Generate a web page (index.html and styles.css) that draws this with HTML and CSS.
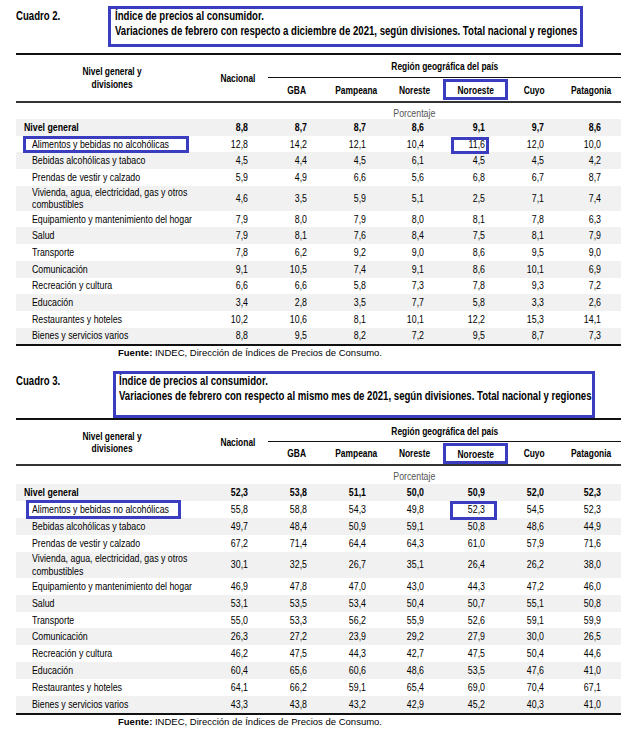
FILE: index.html
```html
<!DOCTYPE html>
<html lang="es">
<head>
<meta charset="utf-8">
<title>Cuadros IPC</title>
<link rel="stylesheet" href="styles.css">
</head>
<body>
<div class="page">

<section class="cuadro t1">
  <div class="cap">
    <div class="cap-num"><span class="sq">Cuadro 2.</span></div>
    <div class="cap-title"><span class="sq">Índice de precios al consumidor.<br>Variaciones de febrero con respecto a diciembre de 2021, según divisiones. Total nacional y regiones</span></div>
  </div>
  <div class="tbl">
    <div class="head">
      <div class="h-label"><span class="sq">Nivel general y<br>divisiones</span></div>
      <div class="h-nac"><span class="sq">Nacional</span></div>
      <div class="h-reg"><span class="sq">Región geográfica del país</span></div>
      <div class="h-sub"><span class="sq">GBA</span></div>
      <div class="h-sub"><span class="sq">Pampeana</span></div>
      <div class="h-sub"><span class="sq">Noreste</span></div>
      <div class="h-sub hl"><span class="sq">Noroeste</span></div>
      <div class="h-sub"><span class="sq">Cuyo</span></div>
      <div class="h-sub"><span class="sq">Patagonia</span></div>
    </div>
    <div class="unit"><div class="unit-text"><span class="sq">Porcentaje</span></div></div>
    <div class="body">
      <div class="row shade total"><div class="lbl top"><span class="sq">Nivel general</span></div><div class="v"><span>8,8</span></div><div class="v"><span>8,7</span></div><div class="v"><span>8,7</span></div><div class="v"><span>8,6</span></div><div class="v"><span>9,1</span></div><div class="v"><span>9,7</span></div><div class="v"><span>8,6</span></div></div>
      <div class="row"><div class="lbl"><span class="lbl-hl"><span class="sq">Alimentos y bebidas no alcohólicas</span></span></div><div class="v"><span>12,8</span></div><div class="v"><span>14,2</span></div><div class="v"><span>12,1</span></div><div class="v"><span>10,4</span></div><div class="v hv"><span>11,6</span></div><div class="v"><span>12,0</span></div><div class="v"><span>10,0</span></div></div>
      <div class="row shade"><div class="lbl"><span class="sq">Bebidas alcohólicas y tabaco</span></div><div class="v"><span>4,5</span></div><div class="v"><span>4,4</span></div><div class="v"><span>4,5</span></div><div class="v"><span>6,1</span></div><div class="v"><span>4,5</span></div><div class="v"><span>4,5</span></div><div class="v"><span>4,2</span></div></div>
      <div class="row"><div class="lbl"><span class="sq">Prendas de vestir y calzado</span></div><div class="v"><span>5,9</span></div><div class="v"><span>4,9</span></div><div class="v"><span>6,6</span></div><div class="v"><span>5,6</span></div><div class="v"><span>6,8</span></div><div class="v"><span>6,7</span></div><div class="v"><span>8,7</span></div></div>
      <div class="row shade tall"><div class="lbl"><span class="sq">Vivienda, agua, electricidad, gas y otros<br>combustibles</span></div><div class="v"><span>4,6</span></div><div class="v"><span>3,5</span></div><div class="v"><span>5,9</span></div><div class="v"><span>5,1</span></div><div class="v"><span>2,5</span></div><div class="v"><span>7,1</span></div><div class="v"><span>7,4</span></div></div>
      <div class="row"><div class="lbl"><span class="sq">Equipamiento y mantenimiento del hogar</span></div><div class="v"><span>7,9</span></div><div class="v"><span>8,0</span></div><div class="v"><span>7,9</span></div><div class="v"><span>8,0</span></div><div class="v"><span>8,1</span></div><div class="v"><span>7,8</span></div><div class="v"><span>6,3</span></div></div>
      <div class="row shade"><div class="lbl"><span class="sq">Salud</span></div><div class="v"><span>7,9</span></div><div class="v"><span>8,1</span></div><div class="v"><span>7,6</span></div><div class="v"><span>8,4</span></div><div class="v"><span>7,5</span></div><div class="v"><span>8,1</span></div><div class="v"><span>7,9</span></div></div>
      <div class="row"><div class="lbl"><span class="sq">Transporte</span></div><div class="v"><span>7,8</span></div><div class="v"><span>6,2</span></div><div class="v"><span>9,2</span></div><div class="v"><span>9,0</span></div><div class="v"><span>8,6</span></div><div class="v"><span>9,5</span></div><div class="v"><span>9,0</span></div></div>
      <div class="row shade"><div class="lbl"><span class="sq">Comunicación</span></div><div class="v"><span>9,1</span></div><div class="v"><span>10,5</span></div><div class="v"><span>7,4</span></div><div class="v"><span>9,1</span></div><div class="v"><span>8,6</span></div><div class="v"><span>10,1</span></div><div class="v"><span>6,9</span></div></div>
      <div class="row"><div class="lbl"><span class="sq">Recreación y cultura</span></div><div class="v"><span>6,6</span></div><div class="v"><span>6,6</span></div><div class="v"><span>5,8</span></div><div class="v"><span>7,3</span></div><div class="v"><span>7,8</span></div><div class="v"><span>9,3</span></div><div class="v"><span>7,2</span></div></div>
      <div class="row shade"><div class="lbl"><span class="sq">Educación</span></div><div class="v"><span>3,4</span></div><div class="v"><span>2,8</span></div><div class="v"><span>3,5</span></div><div class="v"><span>7,7</span></div><div class="v"><span>5,8</span></div><div class="v"><span>3,3</span></div><div class="v"><span>2,6</span></div></div>
      <div class="row"><div class="lbl"><span class="sq">Restaurantes y hoteles</span></div><div class="v"><span>10,2</span></div><div class="v"><span>10,6</span></div><div class="v"><span>8,1</span></div><div class="v"><span>10,1</span></div><div class="v"><span>12,2</span></div><div class="v"><span>15,3</span></div><div class="v"><span>14,1</span></div></div>
      <div class="row shade"><div class="lbl"><span class="sq">Bienes y servicios varios</span></div><div class="v"><span>8,8</span></div><div class="v"><span>9,5</span></div><div class="v"><span>8,2</span></div><div class="v"><span>7,2</span></div><div class="v"><span>9,5</span></div><div class="v"><span>8,7</span></div><div class="v"><span>7,3</span></div></div>
    </div>
  </div>
  <p class="src"><b>Fuente:</b> INDEC, Dirección de Índices de Precios de Consumo.</p>
</section>

<section class="cuadro t2">
  <div class="cap">
    <div class="cap-num"><span class="sq">Cuadro 3.</span></div>
    <div class="cap-title"><span class="sq">Índice de precios al consumidor.<br>Variaciones de febrero con respecto al mismo mes de 2021, según divisiones. Total nacional y regiones</span></div>
  </div>
  <div class="tbl">
    <div class="head">
      <div class="h-label"><span class="sq">Nivel general y<br>divisiones</span></div>
      <div class="h-nac"><span class="sq">Nacional</span></div>
      <div class="h-reg"><span class="sq">Región geográfica del país</span></div>
      <div class="h-sub"><span class="sq">GBA</span></div>
      <div class="h-sub"><span class="sq">Pampeana</span></div>
      <div class="h-sub"><span class="sq">Noreste</span></div>
      <div class="h-sub hl"><span class="sq">Noroeste</span></div>
      <div class="h-sub"><span class="sq">Cuyo</span></div>
      <div class="h-sub"><span class="sq">Patagonia</span></div>
    </div>
    <div class="unit"><div class="unit-text"><span class="sq">Porcentaje</span></div></div>
    <div class="body">
      <div class="row shade total"><div class="lbl top"><span class="sq">Nivel general</span></div><div class="v"><span>52,3</span></div><div class="v"><span>53,8</span></div><div class="v"><span>51,1</span></div><div class="v"><span>50,0</span></div><div class="v"><span>50,9</span></div><div class="v"><span>52,0</span></div><div class="v"><span>52,3</span></div></div>
      <div class="row"><div class="lbl"><span class="lbl-hl"><span class="sq">Alimentos y bebidas no alcohólicas</span></span></div><div class="v"><span>55,8</span></div><div class="v"><span>58,8</span></div><div class="v"><span>54,3</span></div><div class="v"><span>49,8</span></div><div class="v hv"><span>52,3</span></div><div class="v"><span>54,5</span></div><div class="v"><span>52,3</span></div></div>
      <div class="row shade"><div class="lbl"><span class="sq">Bebidas alcohólicas y tabaco</span></div><div class="v"><span>49,7</span></div><div class="v"><span>48,4</span></div><div class="v"><span>50,9</span></div><div class="v"><span>59,1</span></div><div class="v"><span>50,8</span></div><div class="v"><span>48,6</span></div><div class="v"><span>44,9</span></div></div>
      <div class="row"><div class="lbl"><span class="sq">Prendas de vestir y calzado</span></div><div class="v"><span>67,2</span></div><div class="v"><span>71,4</span></div><div class="v"><span>64,4</span></div><div class="v"><span>64,3</span></div><div class="v"><span>61,0</span></div><div class="v"><span>57,9</span></div><div class="v"><span>71,6</span></div></div>
      <div class="row shade tall"><div class="lbl"><span class="sq">Vivienda, agua, electricidad, gas y otros<br>combustibles</span></div><div class="v"><span>30,1</span></div><div class="v"><span>32,5</span></div><div class="v"><span>26,7</span></div><div class="v"><span>35,1</span></div><div class="v"><span>26,4</span></div><div class="v"><span>26,2</span></div><div class="v"><span>38,0</span></div></div>
      <div class="row"><div class="lbl"><span class="sq">Equipamiento y mantenimiento del hogar</span></div><div class="v"><span>46,9</span></div><div class="v"><span>47,8</span></div><div class="v"><span>47,0</span></div><div class="v"><span>43,0</span></div><div class="v"><span>44,3</span></div><div class="v"><span>47,2</span></div><div class="v"><span>46,0</span></div></div>
      <div class="row shade"><div class="lbl"><span class="sq">Salud</span></div><div class="v"><span>53,1</span></div><div class="v"><span>53,5</span></div><div class="v"><span>53,4</span></div><div class="v"><span>50,4</span></div><div class="v"><span>50,7</span></div><div class="v"><span>55,1</span></div><div class="v"><span>50,8</span></div></div>
      <div class="row"><div class="lbl"><span class="sq">Transporte</span></div><div class="v"><span>55,0</span></div><div class="v"><span>53,3</span></div><div class="v"><span>56,2</span></div><div class="v"><span>55,9</span></div><div class="v"><span>52,6</span></div><div class="v"><span>59,1</span></div><div class="v"><span>59,9</span></div></div>
      <div class="row shade"><div class="lbl"><span class="sq">Comunicación</span></div><div class="v"><span>26,3</span></div><div class="v"><span>27,2</span></div><div class="v"><span>23,9</span></div><div class="v"><span>29,2</span></div><div class="v"><span>27,9</span></div><div class="v"><span>30,0</span></div><div class="v"><span>26,5</span></div></div>
      <div class="row"><div class="lbl"><span class="sq">Recreación y cultura</span></div><div class="v"><span>46,2</span></div><div class="v"><span>47,5</span></div><div class="v"><span>44,3</span></div><div class="v"><span>42,7</span></div><div class="v"><span>47,5</span></div><div class="v"><span>50,4</span></div><div class="v"><span>44,6</span></div></div>
      <div class="row shade"><div class="lbl"><span class="sq">Educación</span></div><div class="v"><span>60,4</span></div><div class="v"><span>65,6</span></div><div class="v"><span>60,6</span></div><div class="v"><span>48,6</span></div><div class="v"><span>53,5</span></div><div class="v"><span>47,6</span></div><div class="v"><span>41,0</span></div></div>
      <div class="row"><div class="lbl"><span class="sq">Restaurantes y hoteles</span></div><div class="v"><span>64,1</span></div><div class="v"><span>66,2</span></div><div class="v"><span>59,1</span></div><div class="v"><span>65,4</span></div><div class="v"><span>69,0</span></div><div class="v"><span>70,4</span></div><div class="v"><span>67,1</span></div></div>
      <div class="row shade"><div class="lbl"><span class="sq">Bienes y servicios varios</span></div><div class="v"><span>43,3</span></div><div class="v"><span>43,8</span></div><div class="v"><span>43,2</span></div><div class="v"><span>42,9</span></div><div class="v"><span>45,2</span></div><div class="v"><span>40,3</span></div><div class="v"><span>41,0</span></div></div>
    </div>
  </div>
  <p class="src"><b>Fuente:</b> INDEC, Dirección de Índices de Precios de Consumo.</p>
</section>

</div>
</body>
</html>
```

FILE: styles.css
```css
* { box-sizing: border-box; }

html, body {
  margin: 0;
  background: #fff;
  overflow-x: hidden;
}

body {
  color: #000;
  font-family: "Liberation Sans", Arial, sans-serif;
  font-size: 11px;
}

.page {
  padding-left: 16px;
  width: 621px;
  --cols: 192px 60px 58px 60px 57px 65px 53px 60px;
  --blue: #3a3dbf;
  --rh: 16.7px;
  --narrow: scaleX(0.8);
}

/* narrow-face emulation: Arial metrics squeezed to Arial Narrow width */
.sq {
  display: inline-block;
  white-space: nowrap;
  transform: var(--narrow);
  transform-origin: left center;
}

/* caption */
.cap {
  display: flex;
  align-items: flex-start;
}

.cap-num {
  width: 92px;
  font-weight: bold;
  font-size: 12px;
  line-height: 15px;
  margin-top: 9px;
  overflow: hidden;
}

.cap-title {
  width: 475px;
  margin-top: 6px;
  border: 3px solid var(--blue);
  padding: 0 4px 5px 4px;
  font-weight: bold;
  font-size: 12px;
  line-height: 15px;
  overflow: hidden;
}

/* table */
.tbl {
  margin-top: 6px;
  border-top: 2px solid #111;
}

.head {
  display: grid;
  grid-template-columns: var(--cols);
  grid-template-rows: 23px 23px;
  border-bottom: 2px solid #333;
  font-weight: bold;
  font-size: 10.5px;
}

.head > div {
  display: flex;
  align-items: center;
  justify-content: center;
  text-align: center;
}

.head .sq { transform-origin: center center; }

.h-label {
  grid-column: 1;
  grid-row: 1 / 3;
  line-height: 12.6px;
}

.h-nac {
  grid-column: 2;
  grid-row: 1 / 3;
}

.h-reg {
  grid-column: 3 / 9;
  grid-row: 1;
  border-bottom: 1px solid #111;
}

.h-sub { grid-row: 2; }

.head > .hl {
  border: 3px solid var(--blue);
  margin-top: 1px;
  height: 21px;
}

.unit {
  display: grid;
  grid-template-columns: var(--cols);
  height: 16px;
  padding-top: 4px;
  line-height: 12px;
}

.unit-text {
  grid-column: 2 / 9;
  text-align: center;
  color: #555;
}

.unit-text .sq { transform-origin: center center; }

.body {
  border-bottom: 2px solid #111;
}

.row {
  display: grid;
  grid-template-columns: var(--cols);
  height: var(--rh);
  align-items: center;
  line-height: 13px;
}

.row.tall { height: 25px; }
.row.tall .lbl { line-height: 12.5px; }

.shade { background: #f1f1f1; }

.total { font-weight: bold; }

.lbl {
  padding-left: 16px;
  white-space: nowrap;
  overflow: hidden;
}

.lbl.top { padding-left: 8px; }

.lbl-hl {
  display: inline-block;
  width: 166px;
  height: 17px;
  margin-left: -9px;
  padding-left: 6px;
  border: 3px solid var(--blue);
  line-height: 11px;
}

.v { text-align: center; }

.v > span {
  display: inline-block;
  width: 24px;
  margin-left: -5px;
  text-align: right;
  white-space: nowrap;
  transform: var(--narrow);
  transform-origin: right center;
}

.v.hv { position: relative; }

.v.hv::after {
  content: "";
  position: absolute;
  left: 8px;
  right: 19px;
  top: -1px;
  bottom: -3px;
  border: 3px solid var(--blue);
}

.src {
  margin: 1px 0 0;
  padding-left: 102px;
  font-size: 9.5px;
  line-height: 12px;
}

/* second table */
.t2 { --rh: 16.9px; }

.t2 .cap { margin-top: 12px; }

.t2 .cap-num {
  width: 97px;
  margin-top: 3px;
}

.t2 .cap-title {
  width: 482px;
  margin-top: 0;
  padding: 0 3px 12px 3px;
  line-height: 14.5px;
}

.t2 .tbl { margin-top: 0; }

.t2 .head { grid-template-rows: 22px 22px; }

.t2 .head > .hl { height: 21px; }

.t2 .unit { height: 18px; }

.t2 .row.tall { height: 26px; }

.t2 .lbl-hl {
  width: 155px;
  height: 19px;
  margin-left: -6px;
  padding-left: 3px;
  line-height: 13px;
}

.t2 .v.hv::after {
  left: 7px;
  right: 11px;
  top: -2px;
  bottom: -4px;
}
```
